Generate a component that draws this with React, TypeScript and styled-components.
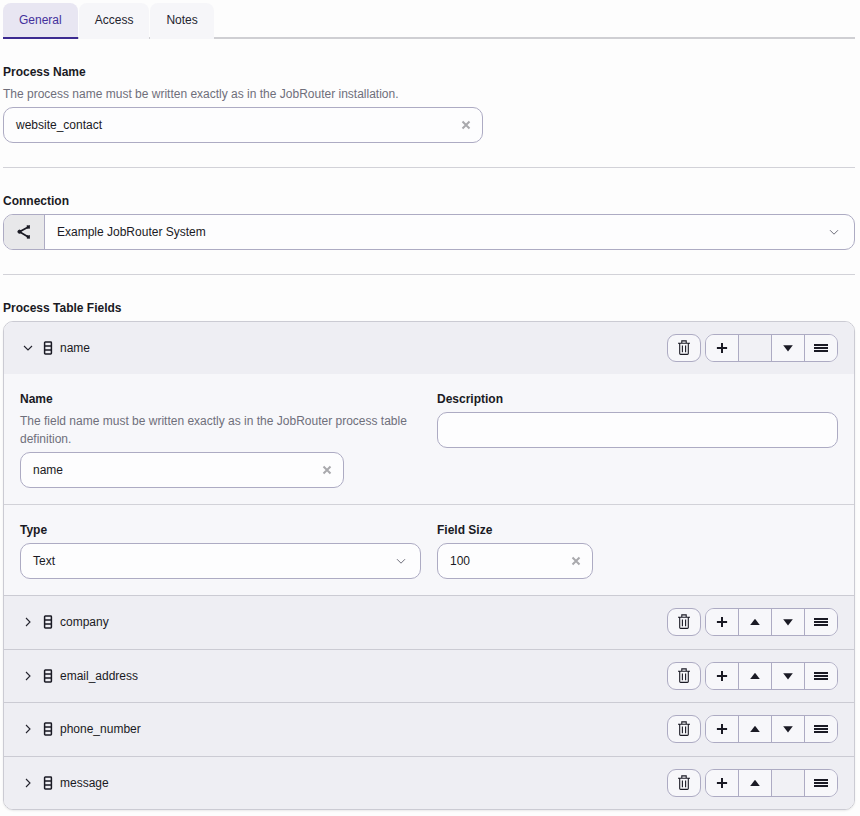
import React from "react";
import styled, { createGlobalStyle } from "styled-components";

const Global = createGlobalStyle`
  html, body { margin: 0; padding: 0; background: #fdfdfd; }
  body { font-family: "Liberation Sans", Arial, sans-serif; font-size: 12px; color: #1a1a24; }
  * { box-sizing: border-box; }
`;

const Page = styled.div`
  padding: 3px 5px 6px 3px;
  display: flex;
  flex-direction: column;
`;
const TabBar = styled.div`
  display: flex;
  gap: 1px;
  border-bottom: 2px solid #cfcfd3;
  height: 36px;
`;
const Tab = styled.div<{ $active?: boolean }>`
  height: 36px;
  padding: 0 16px 1px;
  display: flex;
  align-items: center;
  font-size: 12px;
  border-radius: 8px 8px 0 0;
  background: ${(p) => (p.$active ? "#e8e6f2" : "#f6f6f9")};
  color: ${(p) => (p.$active ? "#44309c" : "#24242e")};
  border-bottom: 2px solid ${(p) => (p.$active ? "#3c2a91" : "transparent")};
`;
const Section = styled.section`
  display: flex;
  flex-direction: column;
`;
const Label = styled.div`
  font-weight: 700;
  font-size: 12px;
  line-height: 14px;
  color: #1a1a24;
`;
const Hint = styled.div`
  font-size: 12px;
  line-height: 18px;
  color: #6f6f7b;
`;
const Divider = styled.hr`
  border: 0;
  border-top: 1px solid #d2d2d8;
  margin: 24px 0 0;
`;
const InputBox = styled.div<{ $w?: number }>`
  height: 36px;
  width: ${(p) => (p.$w ? `${p.$w}px` : "100%")};
  border: 1px solid #adabc3;
  border-radius: 10px;
  background: #fdfdfe;
  display: flex;
  align-items: center;
  padding: 0 11px 0 12px;
  font-size: 12px;
  color: #1a1a24;
`;
const Value = styled.span`
  flex: 1;
`;
const ClearBtn = styled.svg`
  width: 10px;
  height: 10px;
  color: #a9a9ad;
`;
const SelectChevron = styled.svg`
  width: 12px;
  height: 12px;
  color: #6f6f7b;
  margin-right: 2px;
`;
const AddonBox = styled.div`
  height: 36px;
  border: 1px solid #adabc3;
  border-radius: 10px;
  background: #fdfdfe;
  display: flex;
  align-items: center;
  overflow: hidden;
  padding-right: 12px;
`;
const Addon = styled.div`
  width: 41px;
  height: 100%;
  background: #e8e8ea;
  border-right: 1px solid #adabc3;
  display: flex;
  align-items: center;
  justify-content: center;
  margin-right: 12px;
`;
const Accordion = styled.div`
  border: 1px solid #cbcbd3;
  border-radius: 10px;
  overflow: hidden;
  box-shadow: 0 1px 2px rgba(0, 0, 0, 0.08);
  margin-top: 6px;
`;
const Row = styled.div<{ $sep?: boolean }>`
  height: ${(p) => (p.$sep ? 53.5 : 52)}px;
  background: #eeeef3;
  display: flex;
  align-items: center;
  padding: 0 16px;
  border-top: ${(p) => (p.$sep ? "1px solid #cbcbd3" : "none")};
`;
const Chevron = styled.svg`
  width: 12px;
  height: 12px;
  color: #24242e;
  margin-left: 2px;
`;
const DbIcon = styled.svg`
  width: 12px;
  height: 14px;
  margin-left: 8px;
  margin-right: 6px;
  color: #1a1a24;
`;
const RowName = styled.span`
  flex: 1;
  font-size: 12px;
  color: #1a1a24;
`;
const Actions = styled.div`
  display: flex;
  gap: 4px;
`;
const TrashBtn = styled.div`
  width: 34px;
  height: 28px;
  border: 1px solid #adabc3;
  border-radius: 9px;
  background: #f7f7fa;
  display: flex;
  align-items: center;
  justify-content: center;
`;
const BtnGroup = styled.div`
  display: flex;
  width: 133px;
  height: 28px;
  border: 1px solid #adabc3;
  border-radius: 9px;
  overflow: hidden;
`;
const GroupBtn = styled.div<{ $disabled?: boolean }>`
  flex: 1;
  display: flex;
  align-items: center;
  justify-content: center;
  background: ${(p) => (p.$disabled ? "#f1f1f5" : "#f7f7fa")};
  & + & { border-left: 1px solid #adabc3; }
`;
const Panel = styled.div`
  background: #f7f7fa;
`;
const PanelGrid = styled.div<{ $sep?: boolean }>`
  display: grid;
  grid-template-columns: 1fr 1fr;
  gap: 16px;
  padding: 18px 16px 16px;
  border-top: ${(p) => (p.$sep ? "1px solid #d2d2d8" : "none")};
`;
const Field = styled.div`
  display: flex;
  flex-direction: column;
`;
const FieldControl = styled.div<{ $top?: number }>`
  margin-top: ${(p) => p.$top ?? 6}px;
`;
const FieldHint = styled(Hint)`
  margin-top: 6px;
`;
const SectionBlock = styled(Section)<{ $top: number }>`
  margin-top: ${(p) => p.$top}px;
`;
const TopHint = styled(Hint)`
  margin-top: 6px;
`;
const TopControl = styled.div`
  margin-top: 4px;
`;
const Gap = styled.div`
  margin-top: 6px;
`;

const X = () => (
  <ClearBtn viewBox="0 0 10 10" fill="none" stroke="currentColor" strokeWidth="2">
    <path d="M1.5 1.5l7 7M8.5 1.5l-7 7" />
  </ClearBtn>
);
const Down = () => (
  <SelectChevron viewBox="0 0 12 12" fill="none" stroke="currentColor" strokeWidth="1">
    <path d="M2 4.2l4 4 4-4" />
  </SelectChevron>
);
const Share = () => (
  <svg width="16" height="16" viewBox="0 0 16 16" fill="#1a1a24" stroke="#1a1a24" strokeWidth="1.7">
    <path d="M3.5 7.7L12.3 2.9M3.5 7.7L12.3 12.9" fill="none" />
    <circle cx="3.5" cy="7.7" r="1.6" strokeWidth="1" />
    <rect x="11" y="1.6" width="2.8" height="2.8" strokeWidth="0.4" />
    <rect x="11" y="11.6" width="2.8" height="2.8" strokeWidth="0.4" />
  </svg>
);
const Db = () => (
  <DbIcon viewBox="0 0 12 14" fill="none" stroke="currentColor" strokeWidth="1.5">
    <rect x="2.6" y="1" width="6.8" height="12" rx="0.7" />
    <path d="M2.6 5h6.8M2.6 9h6.8" />
  </DbIcon>
);
const Trash = () => (
  <svg width="16" height="16" viewBox="0 0 16 16" fill="none" stroke="#1a1a24" strokeWidth="1.1">
    <path d="M2 3.2h12M5.8 3.2V0.9h4.4v2.3M3.7 3.2v10.3q0 .9.9.9h6.8q.9 0 .9-.9V3.2M6.4 5.6v6.6M9.6 5.6v6.6" />
  </svg>
);
const Plus = () => (
  <svg width="12" height="12" viewBox="0 0 12 12" stroke="#1a1a24" strokeWidth="2">
    <path d="M6 .9v10.2M.9 6h10.2" />
  </svg>
);
const Up = () => (
  <svg width="12" height="12" viewBox="0 0 12 12" fill="#1a1a24">
    <path d="M6 2.8l4.8 6.2H1.2z" />
  </svg>
);
const DownTri = () => (
  <svg width="12" height="12" viewBox="0 0 12 12" fill="#1a1a24">
    <path d="M6 9.4L1.2 3.2h9.6z" />
  </svg>
);
const Menu = () => (
  <svg width="16" height="12" viewBox="0 0 16 12" stroke="#1a1a24" strokeWidth="1.8">
    <path d="M1 3h14M1 6h14M1 9h14" />
  </svg>
);

function FieldRow({ name, open, up = true, down = true, sep = true }: { name: string; open?: boolean; up?: boolean; down?: boolean; sep?: boolean }) {
  return (
    <Row $sep={sep}>
      <Chevron viewBox="0 0 12 12" fill="none" stroke="currentColor" strokeWidth="1.1">
        <path d={open ? "M2 4l4 4 4-4" : "M4 2l4 4-4 4"} />
      </Chevron>
      <Db />
      <RowName>{name}</RowName>
      <Actions>
        <TrashBtn><Trash /></TrashBtn>
        <BtnGroup>
          <GroupBtn><Plus /></GroupBtn>
          <GroupBtn $disabled={!up}>{up && <Up />}</GroupBtn>
          <GroupBtn $disabled={!down}>{down && <DownTri />}</GroupBtn>
          <GroupBtn><Menu /></GroupBtn>
        </BtnGroup>
      </Actions>
    </Row>
  );
}

export default function App() {
  return (
    <Page>
      <Global />
      <TabBar>
        <Tab $active>General</Tab>
        <Tab>Access</Tab>
        <Tab>Notes</Tab>
      </TabBar>
      <SectionBlock $top={26}>
        <Label>Process Name</Label>
        <TopHint>The process name must be written exactly as in the JobRouter installation.</TopHint>
        <TopControl>
          <InputBox $w={480}><Value>website_contact</Value><X /></InputBox>
        </TopControl>
      </SectionBlock>
      <Divider />
      <SectionBlock $top={26}>
        <Label>Connection</Label>
        <Gap>
          <AddonBox>
            <Addon><Share /></Addon>
            <Value>Example JobRouter System</Value>
            <Down />
          </AddonBox>
        </Gap>
      </SectionBlock>
      <Divider />
      <SectionBlock $top={26}>
        <Label>Process Table Fields</Label>
        <Accordion>
          <FieldRow name="name" open up={false} sep={false} />
          <Panel>
            <PanelGrid>
              <Field>
                <Label>Name</Label>
                <FieldHint>The field name must be written exactly as in the JobRouter process table definition.</FieldHint>
                <FieldControl $top={4}>
                  <InputBox $w={324}><Value>name</Value><X /></InputBox>
                </FieldControl>
              </Field>
              <Field>
                <Label>Description</Label>
                <FieldControl><InputBox /></FieldControl>
              </Field>
            </PanelGrid>
            <PanelGrid $sep>
              <Field>
                <Label>Type</Label>
                <FieldControl>
                  <InputBox><Value>Text</Value><Down /></InputBox>
                </FieldControl>
              </Field>
              <Field>
                <Label>Field Size</Label>
                <FieldControl>
                  <InputBox $w={156}><Value>100</Value><X /></InputBox>
                </FieldControl>
              </Field>
            </PanelGrid>
          </Panel>
          <FieldRow name="company" />
          <FieldRow name="email_address" />
          <FieldRow name="phone_number" />
          <FieldRow name="message" down={false} />
        </Accordion>
      </SectionBlock>
    </Page>
  );
}
